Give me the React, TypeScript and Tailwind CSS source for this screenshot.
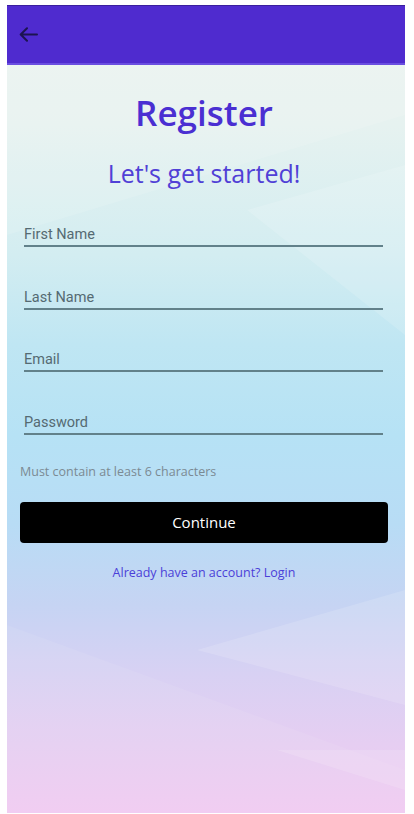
import React from "react";

const fields = ["First Name", "Last Name", "Email", "Password"];

export default function App() {
  return (
    <div className="w-[414px] h-[814px] bg-white pt-[5px] pl-[7px]">
      <div
        className="relative w-[398px] h-[808px] overflow-hidden"
        style={{
          background:
            "linear-gradient(180deg, #eef3ef 0px, #e6f2f0 120px, #d3edf1 250px, #bfe6f3 340px, #b6e2f5 430px, #b8dcf5 520px, #c6d4f3 600px, #d8d1f3 670px, #e6cef2 740px, #f0caf1 808px)",
        }}
      >
        <svg
          className="absolute inset-0 pointer-events-none"
          width="398"
          height="808"
          viewBox="0 0 398 808"
        >
          <polygon points="0,60 398,60 398,110 0,230" fill="#ffffff" opacity="0.12" />
          <polygon points="240,205 398,160 398,330" fill="#ffffff" opacity="0.14" />
          <polygon points="190,645 398,585 398,700" fill="#ffffff" opacity="0.14" />
          <polygon points="0,620 398,765 398,808 0,808" fill="#ffffff" opacity="0.07" />
          <polygon points="270,745 398,745 398,785" fill="#ffffff" opacity="0.14" />
        </svg>

        <div className="relative h-[60px] bg-[#4f2bcf] border-t border-[#3a1e9e] border-b-2 border-b-[#6a4ee0] flex items-center pl-[12px]">
          <svg width="19" height="15" viewBox="0 0 19 15" fill="none">
            <path
              d="M18 7.5H2M8 1.2L1.7 7.5 8 13.8"
              stroke="#1c1450"
              strokeWidth="2"
              strokeLinecap="round"
              strokeLinejoin="round"
            />
          </svg>
        </div>

        <div className="relative flex flex-col" style={{ fontFamily: "'Open Sans', sans-serif" }}>
          <h1 className="mt-[26px] text-center text-[35px] leading-[44px] font-semibold text-[#4a2fd2] pr-[4px]">
            Register
          </h1>
          <p className="mt-[22px] text-center text-[25px] leading-[32px] text-[#5040d6] pr-[4px]">
            Let's get started!
          </p>

          <div className="mt-[36px] ml-[17px] w-[359px] flex flex-col gap-[40.5px]">
            {fields.map((f) => (
              <div
                key={f}
                className="h-[22px] border-b-2 border-[#62818a] text-[14.5px] leading-[20px] text-[#556a72]"
                style={{ fontFamily: "Roboto, sans-serif" }}
              >
                {f}
              </div>
            ))}
          </div>

          <p className="mt-[29px] ml-[13px] text-[12.5px] leading-[16px] text-[#7b8a93]">
            Must contain at least 6 characters
          </p>

          <button className="mt-[22px] ml-[13px] w-[368px] h-[41px] rounded-[4px] bg-black text-white text-[15px] leading-[20px]">
            Continue
          </button>

          <p className="mt-[21px] text-center text-[12.5px] leading-[18px] text-[#4b3fd8] pr-[4px]">
            Already have an account? Login
          </p>
        </div>
      </div>
    </div>
  );
}
